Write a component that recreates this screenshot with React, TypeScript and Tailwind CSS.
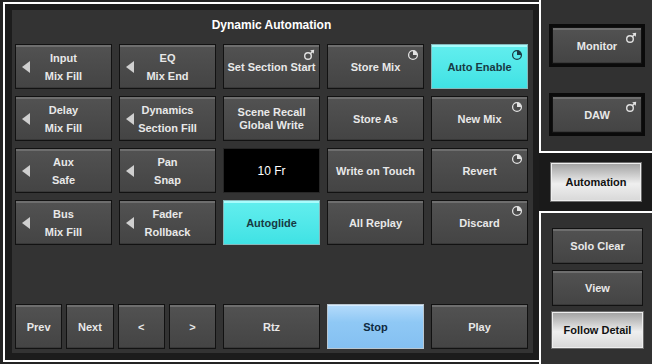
import React from "react";

type Variant = "dark" | "cyan" | "blue" | "white" | "display";

const variants: Record<Variant, string> = {
  dark: "border border-[#121212] bg-linear-to-b from-[#525252] to-[#444444] shadow-[inset_0_2px_0_#6e6e6e,inset_0_-1px_0_#383838] text-[#e8e8e8]",
  cyan: "border border-[#86b9bc] bg-linear-to-b from-[#62eeee] to-[#3fe2e4] shadow-[inset_0_2px_0_#a8fcfc] text-[#173a44]",
  blue: "border border-[#b9c6d0] bg-linear-to-b from-[#b4dbfb] via-[#8fc8f5] via-40% to-[#84c0f1] shadow-[inset_0_1px_0_#d6ecff] text-[#0f2a3f]",
  white: "border border-[#eeeeee] bg-linear-to-b from-[#a4a4a4] via-[#efefef] via-55% to-[#d9d9d9] shadow-[0_0_0_1px_#6b6b6b] text-[#111111]",
  display: "border border-[#262626] bg-black text-white font-normal text-[12px]",
};

const ExtIcon = ({ color }: { color: string }) => (
  <svg width="12" height="12" viewBox="0 0 12 12" className="absolute top-[4px] right-[4px]">
    <circle cx="5" cy="7" r="3.3" fill="none" stroke={color} strokeWidth="1.4" />
    <line x1="7.3" y1="4.7" x2="10" y2="2" stroke={color} strokeWidth="1.4" />
    <polygon points="11.2,0.8 7.2,1.3 10.7,4.8" fill={color} />
  </svg>
);

const PieIcon = ({ color, fill }: { color: string; fill: string }) => (
  <svg width="12" height="12" viewBox="0 0 12 12" className="absolute top-[4px] right-[4px]">
    <circle cx="6" cy="6" r="4.4" fill={fill} stroke={color} strokeWidth="1.3" />
    <path d="M6 6 L6 1.6 A4.4 4.4 0 0 1 10.4 6 Z" fill={color} />
  </svg>
);

const Arrow = () => (
  <svg width="8" height="12" viewBox="0 0 8 12" className="absolute left-[6px] top-1/2 -translate-y-1/2">
    <polygon points="8,0 8,12 0,6" fill="#cfcfcf" />
  </svg>
);

type BtnProps = {
  v?: Variant;
  lines: string[];
  arrow?: boolean;
  icon?: "ext" | "pie";
  tight?: boolean;
  className?: string;
};

function Btn({ v = "dark", lines, arrow, icon, tight, className = "" }: BtnProps) {
  const iconColor = v === "cyan" ? "#1b3b45" : "#e2e2e2";
  const iconFill = v === "cyan" ? "none" : "#4a4a4a";
  return (
    <div className={`relative flex flex-col items-center justify-center font-bold text-[11px] ${variants[v]} ${className}`}>
      {arrow && <Arrow />}
      {lines.map((l) => (
        <div key={l} className={tight ? "leading-[13px]" : "leading-[18px]"}>
          {l}
        </div>
      ))}
      {icon === "ext" && <ExtIcon color={iconColor} />}
      {icon === "pie" && <PieIcon color={iconColor} fill={iconFill} />}
    </div>
  );
}

const grid: BtnProps[] = [
  { lines: ["Input", "Mix Fill"], arrow: true },
  { lines: ["EQ", "Mix End"], arrow: true },
  { lines: ["Set Section Start"], icon: "ext" },
  { lines: ["Store Mix"], icon: "pie" },
  { lines: ["Auto Enable"], icon: "pie", v: "cyan" },
  { lines: ["Delay", "Mix Fill"], arrow: true },
  { lines: ["Dynamics", "Section Fill"], arrow: true },
  { lines: ["Scene Recall", "Global Write"], tight: true },
  { lines: ["Store As"] },
  { lines: ["New Mix"], icon: "pie" },
  { lines: ["Aux", "Safe"], arrow: true },
  { lines: ["Pan", "Snap"], arrow: true },
  { lines: ["10 Fr"], v: "display" },
  { lines: ["Write on Touch"] },
  { lines: ["Revert"], icon: "pie" },
  { lines: ["Bus", "Mix Fill"], arrow: true },
  { lines: ["Fader", "Rollback"], arrow: true },
  { lines: ["Autoglide"], v: "cyan" },
  { lines: ["All Replay"] },
  { lines: ["Discard"], icon: "pie" },
];

export default function App() {
  return (
    <div className="flex w-[652px] h-[364px] overflow-hidden bg-[#242424] font-['Liberation_Sans',Arial,sans-serif]">
      {/* main panel */}
      <div className="w-[539px] shrink-0 pl-[3px] pt-[2px]">
        <div className="h-[360px] border-l-2 border-t-2 border-b-2 border-white bg-[#1c1c1c] pl-[7px] pt-[6px] pr-[6px] pb-[7px]">
          <div className="h-full bg-[#333333] flex flex-col pl-[3px] pr-[5px] pb-[4px]">
            <div className="h-[34px] pt-[7px] text-center text-white font-bold text-[12px] leading-[16px]">
              Dynamic Automation
            </div>
            <div className="grid grid-cols-[repeat(5,97px)] auto-rows-[45px] gap-[7px]">
              {grid.map((b, i) => (
                <Btn key={i} {...b} />
              ))}
            </div>
            <div className="mt-auto grid grid-cols-[repeat(5,97px)] h-[45px] gap-[7px]">
              <div className="col-span-2 grid grid-cols-4 gap-[4px]">
                <Btn lines={["Prev"]} />
                <Btn lines={["Next"]} />
                <Btn lines={["<"]} />
                <Btn lines={[">"]} />
              </div>
              <Btn lines={["Rtz"]} />
              <Btn lines={["Stop"]} v="blue" />
              <Btn lines={["Play"]} />
            </div>
          </div>
        </div>
      </div>

      {/* right column */}
      <div className="flex-1 flex flex-col">
        <div className="h-[153px] border-l-2 border-b-2 border-white bg-[#313131] pl-[8px] pt-[24px] flex flex-col gap-[26px]">
          <div className="w-[96px] p-[3px] bg-[#0a0a0a]">
            <Btn lines={["Monitor"]} icon="ext" className="h-[37px]" />
          </div>
          <div className="w-[96px] p-[3px] bg-[#0a0a0a]">
            <Btn lines={["DAW"]} icon="ext" className="h-[37px]" />
          </div>
        </div>
        <div className="h-[58px] bg-[#1a1a1a] pl-[12px] pt-[10px]">
          <Btn lines={["Automation"]} v="white" className="w-[90px] h-[38px]" />
        </div>
        <div className="flex-1 border-l-2 border-t-2 border-white bg-[#313131] pl-[11px] pt-[15px] flex flex-col gap-[6px]">
          <Btn lines={["Solo Clear"]} className="w-[91px] h-[36px]" />
          <Btn lines={["View"]} className="w-[91px] h-[36px]" />
          <Btn lines={["Follow Detail"]} v="white" className="w-[91px] h-[36px]" />
        </div>
      </div>
    </div>
  );
}
